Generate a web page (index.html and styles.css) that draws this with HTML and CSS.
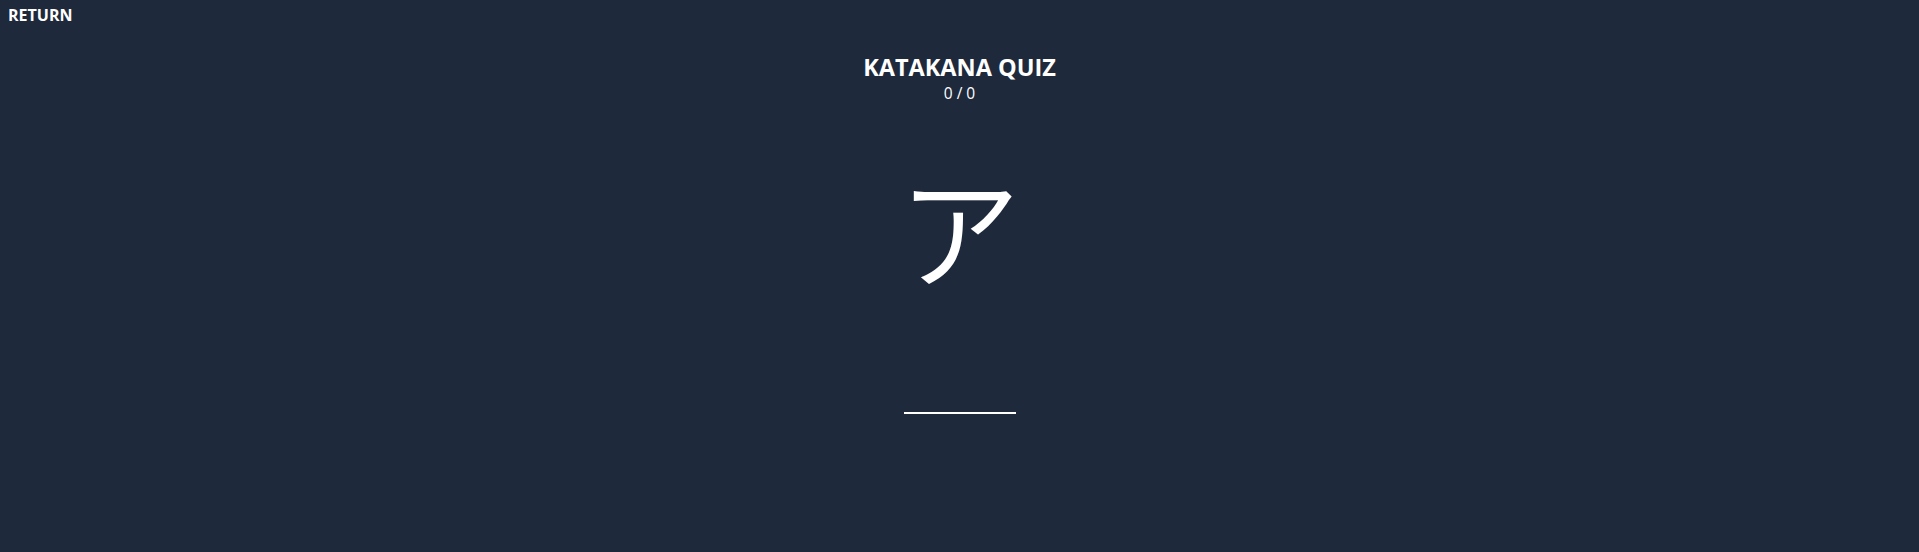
FILE: index.html
```html
<!DOCTYPE html>
<html lang="en">
<head>
<meta charset="utf-8">
<title>Katakana Quiz</title>
<link rel="stylesheet" href="styles.css">
</head>
<body>
<div class="app">
  <header class="topbar">
    <button class="return-btn" type="button">RETURN</button>
  </header>
  <main class="quiz">
    <h1 class="title">KATAKANA QUIZ</h1>
    <div class="score">0 / 0</div>
    <div class="kana" lang="ja">ア</div>
    <input class="answer" type="text" aria-label="answer">
  </main>
</div>
</body>
</html>
```

FILE: styles.css
```css
html, body {
  margin: 0;
  padding: 0;
  height: 100%;
}
body {
  background: #1e293b;
  color: #ffffff;
  font-family: "Open Sans", "Noto Sans", sans-serif;
}
.app {
  min-height: 100%;
}
.topbar {
  display: flex;
  padding: 4px 8px 0;
}
.return-btn {
  background: none;
  border: none;
  padding: 0;
  color: #ffffff;
  font-family: "Open Sans", sans-serif;
  font-weight: 700;
  font-size: 16px;
  line-height: 22px;
  cursor: pointer;
}
.quiz {
  display: flex;
  flex-direction: column;
  align-items: center;
}
.title {
  margin: 26px 0 0;
  font-size: 23.5px;
  line-height: 31px;
  font-weight: 700;
}
.score {
  font-size: 15.5px;
  line-height: 20px;
  margin-top: 0;
}
.kana {
  font-family: "Noto Sans CJK JP", sans-serif;
  font-weight: 350;
  font-size: 122px;
  line-height: 1;
  margin-top: 62px;
}
.answer {
  margin-top: 101px;
  width: 112px;
  box-sizing: border-box;
  background: transparent;
  border: none;
  border-bottom: 2px solid #ffffff;
  color: #ffffff;
  font-size: 20px;
  text-align: center;
  outline: none;
  padding: 0;
  height: 26px;
}
```
